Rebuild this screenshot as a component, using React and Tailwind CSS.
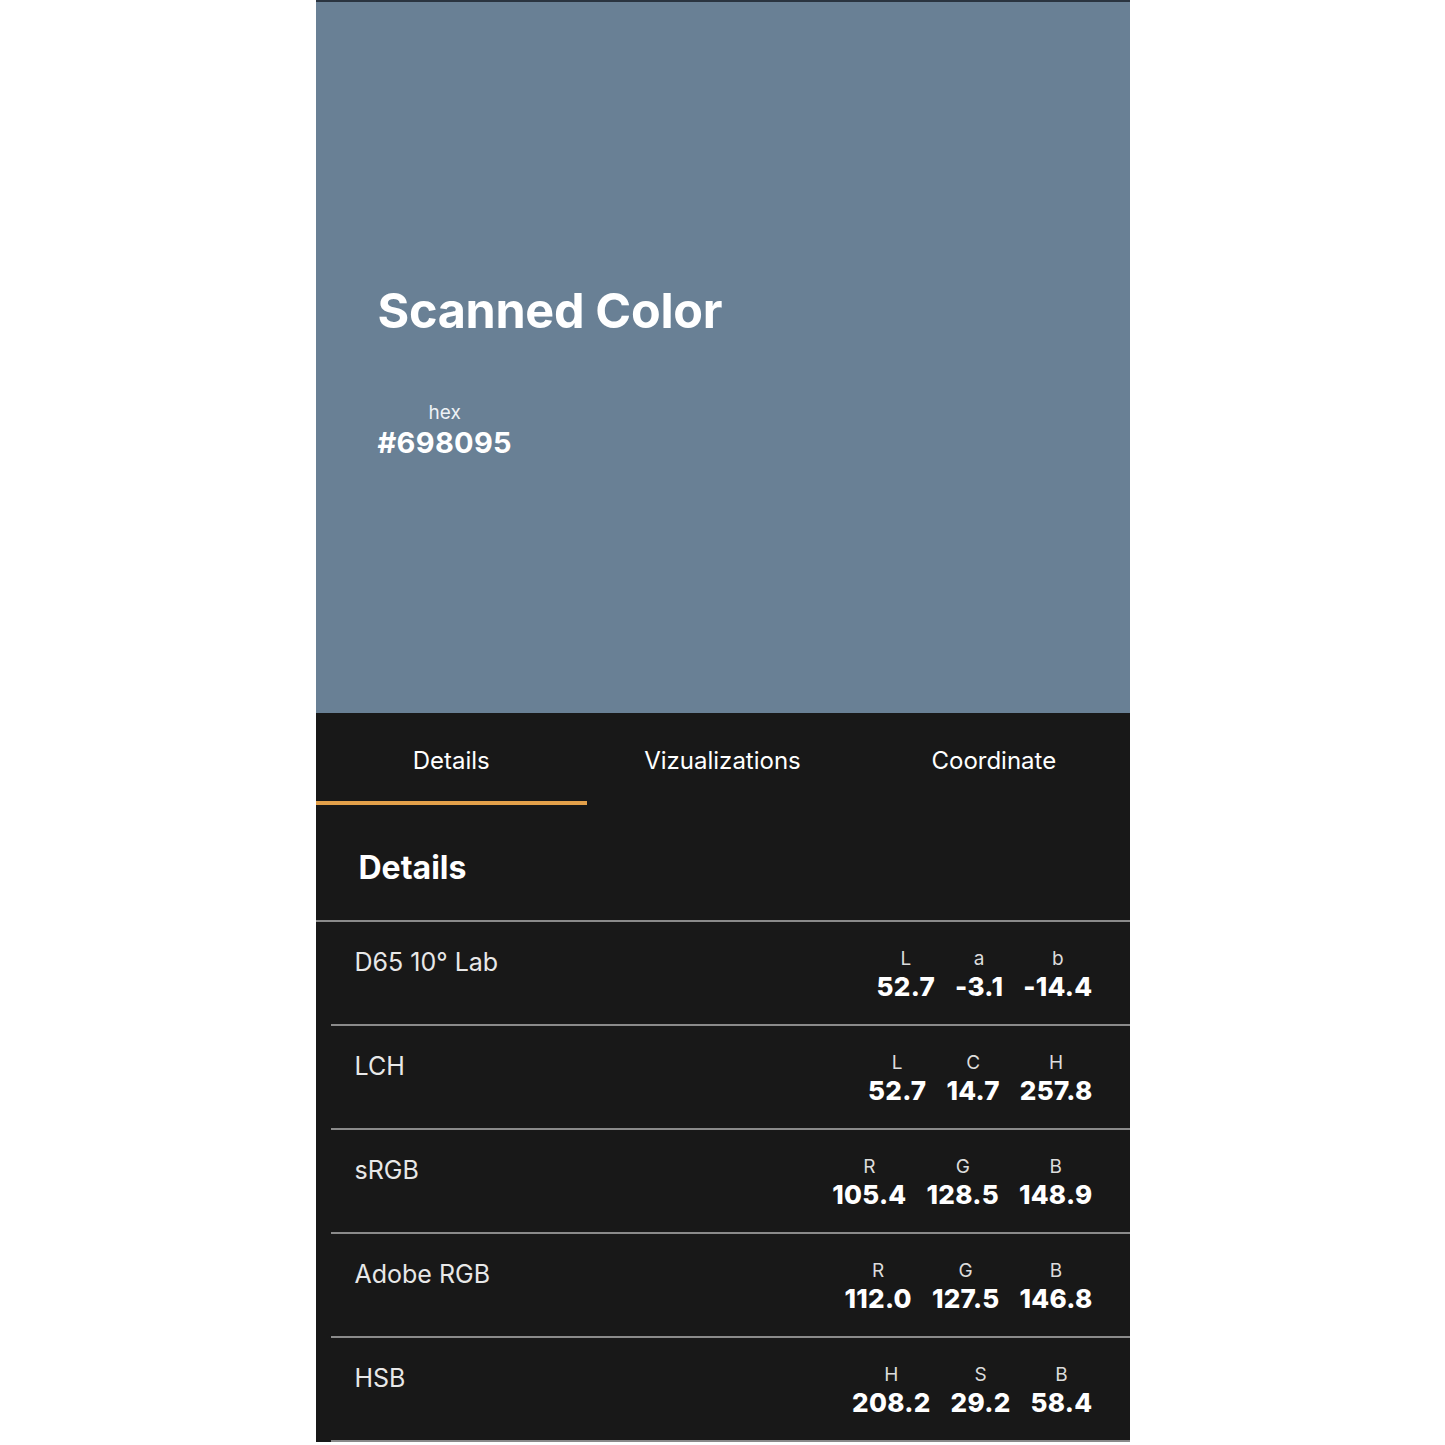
import React from 'react';

const ROWS = [
  { name: 'D65 10° Lab', vals: [['L', '52.7'], ['a', '-3.1'], ['b', '-14.4']] },
  { name: 'LCH', vals: [['L', '52.7'], ['C', '14.7'], ['H', '257.8']] },
  { name: 'sRGB', vals: [['R', '105.4'], ['G', '128.5'], ['B', '148.9']] },
  { name: 'Adobe RGB', vals: [['R', '112.0'], ['G', '127.5'], ['B', '146.8']] },
  { name: 'HSB', vals: [['H', '208.2'], ['S', '29.2'], ['B', '58.4']] },
];

const TABS = ['Details', 'Vizualizations', 'Coordinate'];

export default function App() {
  return (
    <div className="min-h-screen bg-white" style={{ fontFamily: 'Inter, "Noto Sans", sans-serif' }}>
      <div className="w-[814px] mx-auto border-t-2 border-[#2a3440] bg-[#181818]">
        {/* swatch */}
        <div className="h-[711px] bg-[#698095] flex flex-col pl-[62px] pt-[280px] text-white">
          <h1 className="text-[48.5px] font-bold leading-[58px] tracking-[-0.3px]">Scanned Color</h1>
          <div className="mt-[61px] flex flex-col items-center w-fit">
            <span className="text-[19px] leading-[24px] text-[#eef2f6]">hex</span>
            <span className="text-[29px] font-bold leading-[36px] tracking-[0.3px]">#698095</span>
          </div>
        </div>

        {/* tabs */}
        <div className="grid grid-cols-3 h-[92px]">
          {TABS.map((t, i) => (
            <div key={t} className="flex flex-col">
              <div className="flex-1 flex items-center justify-center text-[24px] text-white pt-[7px]">{t}</div>
              <div className={`h-[4px] ${i === 0 ? 'bg-[#e3a04a]' : ''}`} />
            </div>
          ))}
        </div>

        <div className="h-[115px] flex items-center pl-[43px] pt-[10px]">
          <h2 className="text-[32px] font-bold text-white">Details</h2>
        </div>
        <div className="h-[2px] bg-[#8a8a8a]" />

        {ROWS.map((r) => (
          <div key={r.name} className="ml-[15px]">
            <div className="h-[102px] flex justify-between pl-[24px] pr-[37px] pt-[26px]">
              <span className="text-[25px] leading-[28px] text-[#e8e8e8]">{r.name}</span>
              <div className="flex gap-[20px]">
                {r.vals.map(([k, v]) => (
                  <div key={k + v} className="flex flex-col items-center">
                    <span className="text-[19px] leading-[22px] text-[#dcdcdc]">{k}</span>
                    <span className="text-[26px] font-extrabold leading-[34px] text-white tracking-[0.3px]">{v}</span>
                  </div>
                ))}
              </div>
            </div>
            <div className="h-[2px] bg-[#8a8a8a]" />
          </div>
        ))}
      </div>
    </div>
  );
}
